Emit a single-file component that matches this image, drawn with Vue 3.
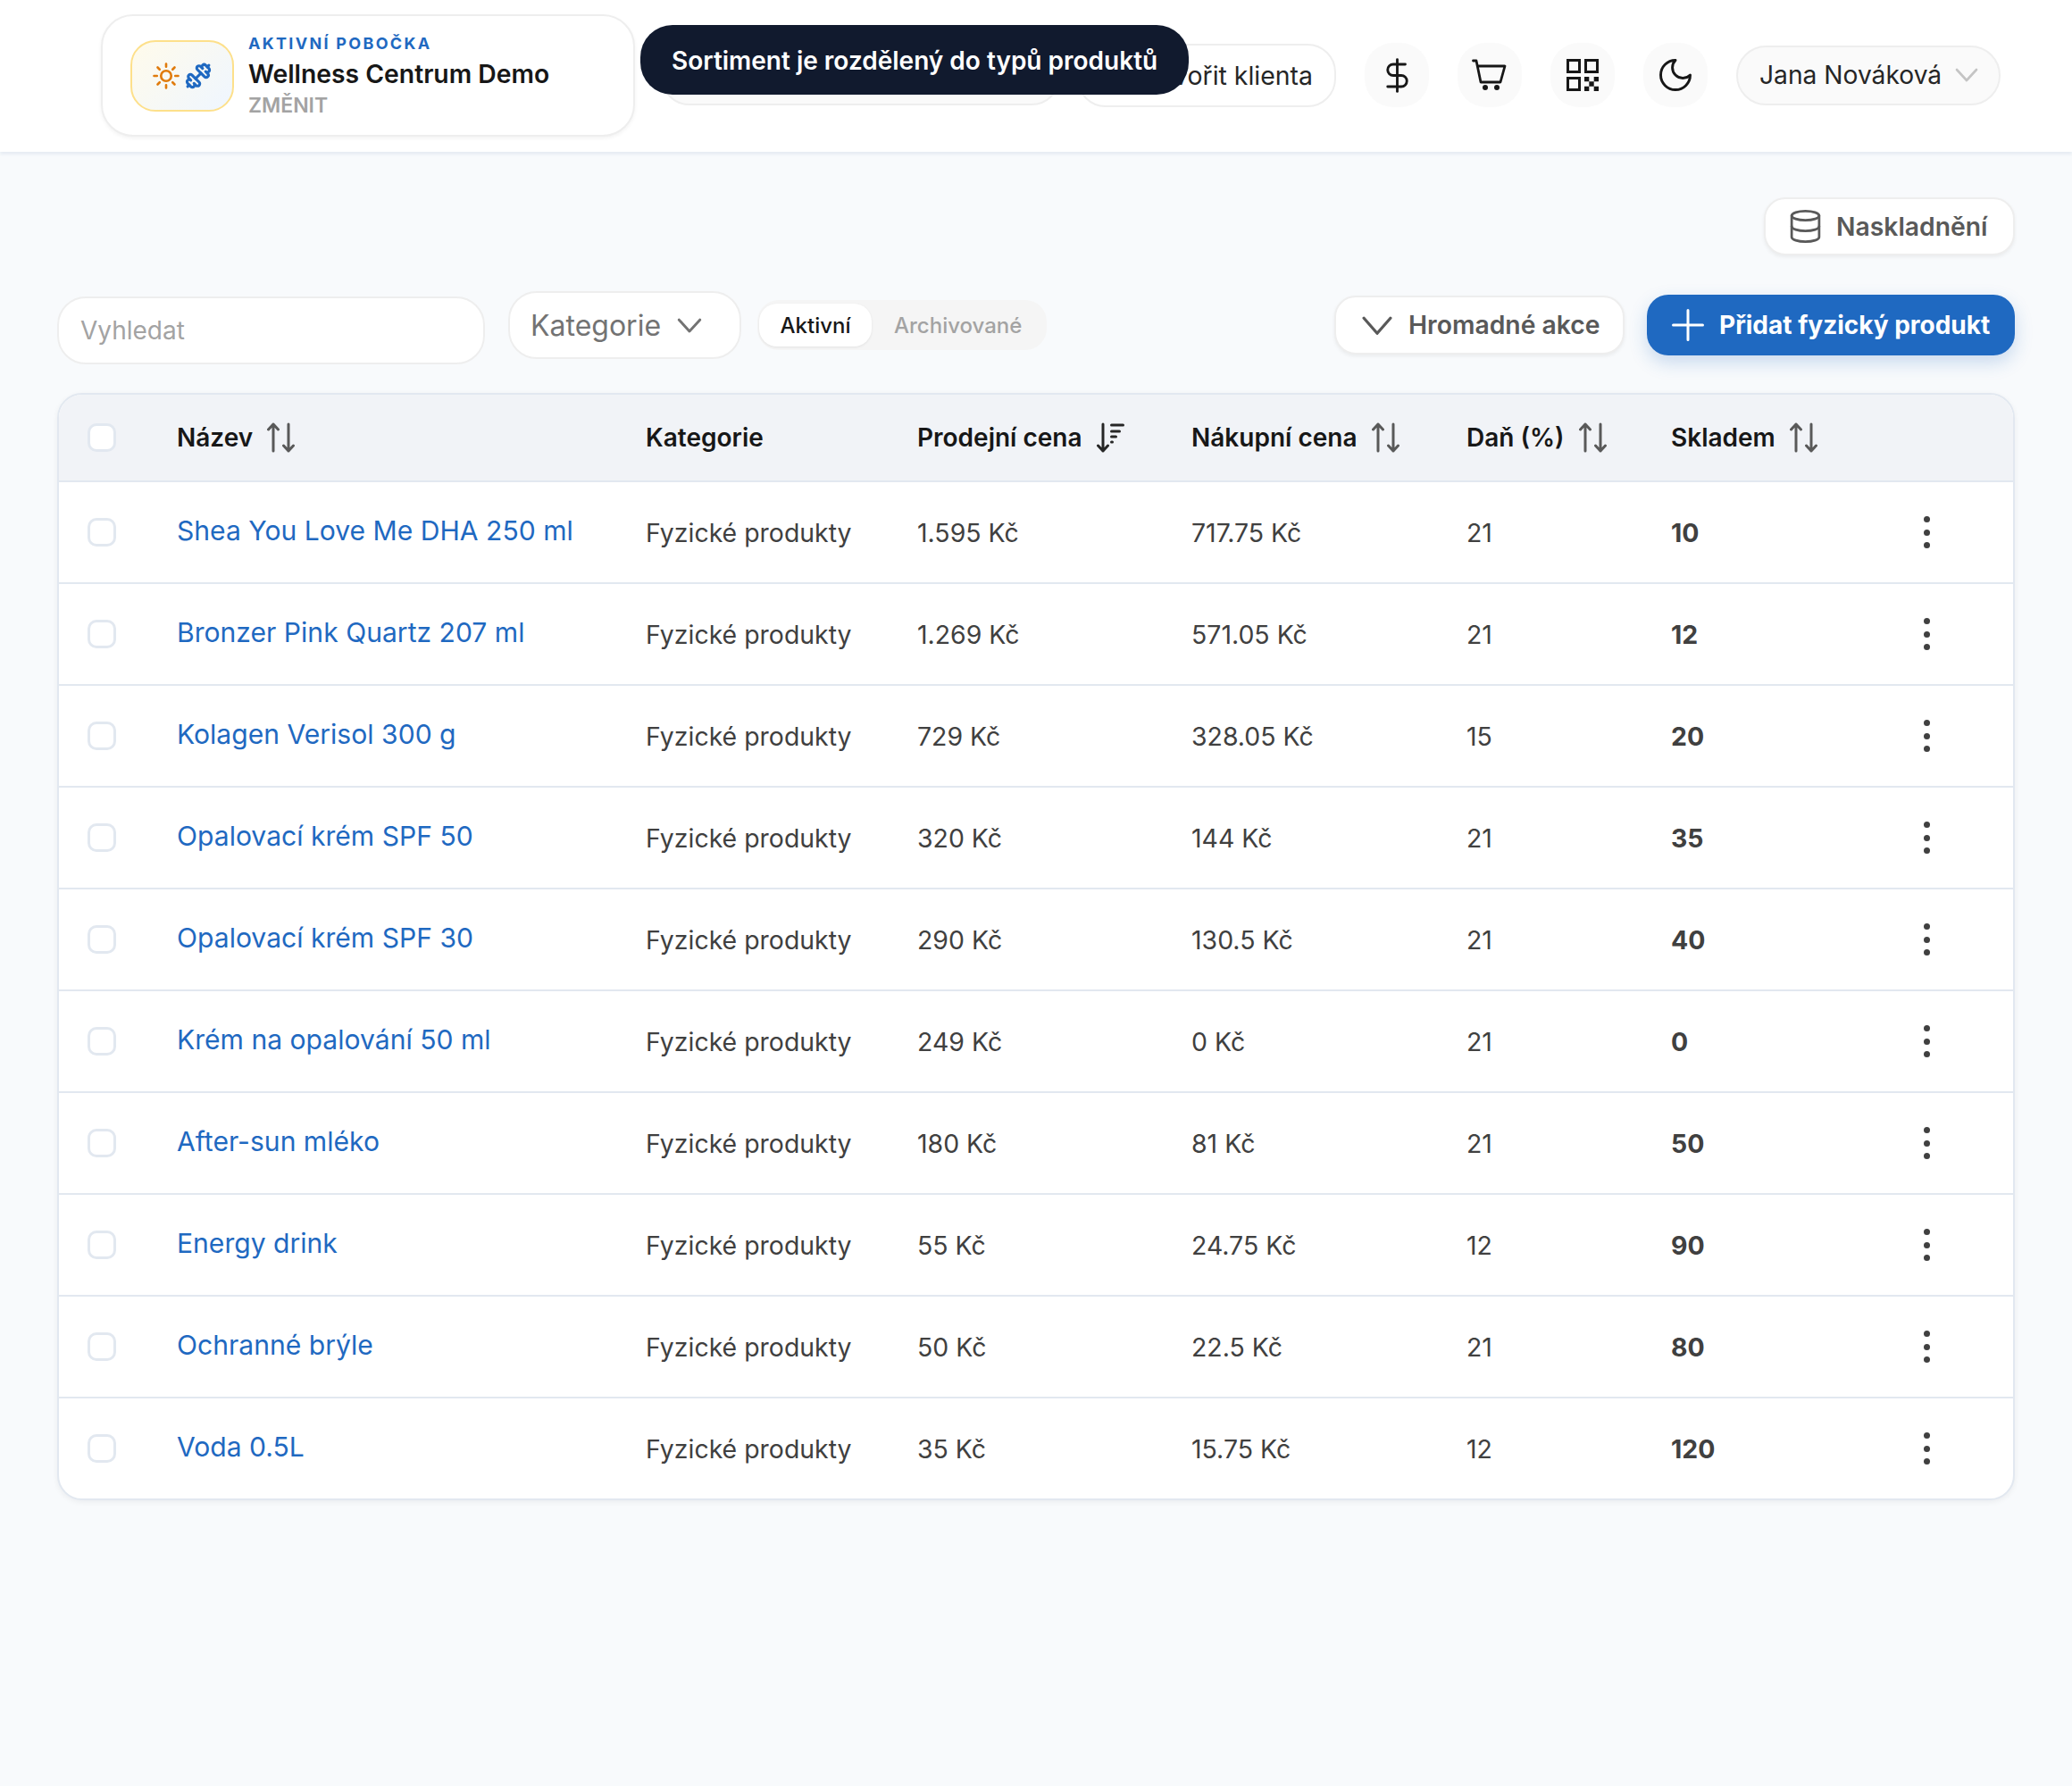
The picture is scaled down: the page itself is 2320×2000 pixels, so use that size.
<template>
  <div class="page">
    <header class="topbar">
      <div class="branch">
        <div class="branch-logo">
          <svg width="30" height="30" viewBox="0 0 24 24" fill="none" stroke="#e07b0c" stroke-width="2.1" stroke-linecap="round">
            <circle cx="12" cy="12" r="4.6" />
            <path d="M12 1.2v2.6M12 20.2v2.6M1.2 12h2.6M20.2 12h2.6M4.4 4.4l1.8 1.8M17.8 17.8l1.8 1.8M4.4 19.6l1.8-1.8M17.8 6.2l1.8-1.8" />
          </svg>
          <svg width="30" height="30" viewBox="0 0 24 24" fill="none" stroke="#1f69c1" stroke-width="2.5" stroke-linecap="round" stroke-linejoin="round">
            <g transform="matrix(-1 0 0 1 24 0)">
              <path d="M14.4 14.4 9.6 9.6" />
              <path d="M18.657 21.485a2 2 0 1 1-2.829-2.828l-1.767 1.768a2 2 0 1 1-2.829-2.829l6.364-6.364a2 2 0 1 1 2.829 2.829l-1.768 1.767a2 2 0 1 1 2.828 2.829z" />
              <path d="m21.5 21.5-1.4-1.4" />
              <path d="M3.9 3.9 2.5 2.5" />
              <path d="M6.404 12.768a2 2 0 1 1-2.829-2.829l1.768-1.767a2 2 0 1 1-2.828-2.829l2.828-2.828a2 2 0 1 1 2.829 2.828l1.767-1.768a2 2 0 1 1 2.829 2.829z" />
            </g>
          </svg>
        </div>
        <div class="branch-text">
          <div class="branch-label">AKTIVNÍ POBOČKA</div>
          <div class="branch-name">Wellness Centrum Demo</div>
          <div class="branch-change">ZMĚNIT</div>
        </div>
      </div>

      <div class="top-actions">
        <div class="top-pill top-pill-grey"></div>
        <button class="top-pill top-pill-white">Vytvořit klienta</button>
        <button class="icon-btn">
          <svg width="43" height="43" viewBox="0 0 24 24" fill="none" stroke="#171717" stroke-width="1.6" stroke-linecap="round" stroke-linejoin="round">
            <path d="M12 2v20" />
            <path d="M17 5H9.5a3.5 3.5 0 0 0 0 7h5a3.5 3.5 0 0 1 0 7H6" />
          </svg>
        </button>
        <button class="icon-btn">
          <svg width="40" height="40" viewBox="0 0 40 40" fill="none" stroke="#171717" stroke-width="2.8" stroke-linecap="round" stroke-linejoin="round">
            <path d="M1.5 4H5l5 24h22l5-18H7" />
            <circle cx="15" cy="34" r="3" fill="#171717" stroke="none" />
            <circle cx="28" cy="34" r="3" fill="#171717" stroke="none" />
          </svg>
        </button>
        <button class="icon-btn">
          <svg width="36" height="36" viewBox="0 0 36 36" fill="none" stroke="#171717" stroke-width="3">
            <rect x="1.5" y="1.5" width="13" height="13" />
            <rect x="21.5" y="1.5" width="13" height="13" />
            <rect x="1.5" y="21.5" width="13" height="13" />
            <path fill="#171717" stroke="none" d="M20 20h5.3v5.3H20zM30.7 20H36v5.3h-5.3zM25.3 25.3h5.4v5.4h-5.4zM20 30.7h5.3V36H20zM30.7 30.7H36V36h-5.3z" />
          </svg>
        </button>
        <button class="icon-btn">
          <svg width="44" height="44" viewBox="0 0 24 24" fill="none" stroke="#171717" stroke-width="1.6" stroke-linecap="round" stroke-linejoin="round">
            <path d="M12 3a6 6 0 0 0 9 9 9 9 0 1 1-9-9z" />
          </svg>
        </button>
        <button class="user-pill">
          <span>Jana Nováková</span>
          <svg width="26" height="24" viewBox="0 0 26 24" fill="none" stroke="#c4c4c4" stroke-width="2.6" stroke-linecap="round" stroke-linejoin="round">
            <path d="m2 6 11 12L24 6" />
          </svg>
        </button>
      </div>

      <div class="tooltip">Sortiment je rozdělený do typů produktů</div>
    </header>

    <main class="content">
      <div class="stock-row">
        <button class="ghost-btn stock-btn">
          <svg width="41" height="41" viewBox="0 0 24 24" fill="none" stroke="#595959" stroke-width="1.6" stroke-linecap="round" stroke-linejoin="round">
            <ellipse cx="12" cy="5" rx="9" ry="3" />
            <path d="M3 5v14a9 3 0 0 0 18 0V5" />
            <path d="M3 12a9 3 0 0 0 18 0" />
          </svg>
          Naskladnění
        </button>
      </div>

      <div class="toolbar">
        <input class="search" type="text" placeholder="Vyhledat" />
        <button class="category">
          Kategorie
          <svg width="28" height="28" viewBox="0 0 24 24" fill="none" stroke="#737373" stroke-width="2.5" stroke-linecap="round" stroke-linejoin="round">
            <path d="m2 7 10 11L22 7" />
          </svg>
        </button>
        <div class="tabs">
          <span class="tab tab-active">Aktivní</span>
          <span class="tab">Archivované</span>
        </div>
        <button class="ghost-btn bulk-btn">
          <svg width="34" height="34" viewBox="0 0 24 24" fill="none" stroke="#595959" stroke-width="2.3" stroke-linecap="round" stroke-linejoin="round">
            <path d="m1.5 6.5 10.5 12 10.5-12" />
          </svg>
          Hromadné akce
        </button>
        <button class="primary-btn">
          <svg width="36" height="36" viewBox="0 0 24 24" fill="none" stroke="#fff" stroke-width="2" stroke-linecap="round">
            <path d="M12 1v22M1 12h22" />
          </svg>
          Přidat fyzický produkt
        </button>
      </div>

      <div class="table-wrap">
        <table class="products">
          <colgroup>
            <col class="col-check" />
            <col class="col-name" />
            <col class="col-cat" />
            <col class="col-price" />
            <col class="col-buy" />
            <col class="col-tax" />
            <col class="col-stock" />
            <col />
          </colgroup>
          <thead>
            <tr>
              <th><span class="check"></span></th>
              <th v-for="col in columns" :key="col.label">
                <span class="th-inner">
                  {{ col.label }}
                  <svg v-if="col.sort === 'both'" class="sort" width="32" height="34" viewBox="0 0 32 34" fill="none" stroke="#595959" stroke-width="3" stroke-linecap="round" stroke-linejoin="round">
                    <path d="M7 32V2M1.5 8 7 2l5.500 6" />
                    <path d="M24 2v30M18.500 26l5.500 6 5.500-6" />
                  </svg>
                  <svg v-else-if="col.sort === 'desc'" class="sort" width="32" height="34" viewBox="0 0 32 34" fill="none" stroke="#262626" stroke-width="3" stroke-linecap="round" stroke-linejoin="round">
                    <path d="M7 2v30M1.500 26 7 32l5.500-6" />
                    <path d="M16.500 3h13M16.500 10h9M16.500 16h5M16.500 22h1" />
                  </svg>
                </span>
              </th>
              <th></th>
            </tr>
          </thead>
          <tbody>
            <tr v-for="item in products" :key="item.name">
              <td><span class="check"></span></td>
              <td><a class="name">{{ item.name }}</a></td>
              <td>Fyzické produkty</td>
              <td>{{ item.price }}</td>
              <td>{{ item.buy }}</td>
              <td>{{ item.tax }}</td>
              <td class="stock">{{ item.stock }}</td>
              <td>
                <span class="dots"><i></i><i></i><i></i></span>
              </td>
            </tr>
          </tbody>
        </table>
      </div>
    </main>
  </div>
</template>

<script setup>
const columns = [
  { label: 'Název', sort: 'both' },
  { label: 'Kategorie', sort: null },
  { label: 'Prodejní cena', sort: 'desc' },
  { label: 'Nákupní cena', sort: 'both' },
  { label: 'Daň (%)', sort: 'both' },
  { label: 'Skladem', sort: 'both' }
]

const products = [
  { name: 'Shea You Love Me DHA 250 ml', price: '1.595 Kč', buy: '717.75 Kč', tax: 21, stock: 10 },
  { name: 'Bronzer Pink Quartz 207 ml', price: '1.269 Kč', buy: '571.05 Kč', tax: 21, stock: 12 },
  { name: 'Kolagen Verisol 300 g', price: '729 Kč', buy: '328.05 Kč', tax: 15, stock: 20 },
  { name: 'Opalovací krém SPF 50', price: '320 Kč', buy: '144 Kč', tax: 21, stock: 35 },
  { name: 'Opalovací krém SPF 30', price: '290 Kč', buy: '130.5 Kč', tax: 21, stock: 40 },
  { name: 'Krém na opalování 50 ml', price: '249 Kč', buy: '0 Kč', tax: 21, stock: 0 },
  { name: 'After-sun mléko', price: '180 Kč', buy: '81 Kč', tax: 21, stock: 50 },
  { name: 'Energy drink', price: '55 Kč', buy: '24.75 Kč', tax: 12, stock: 90 },
  { name: 'Ochranné brýle', price: '50 Kč', buy: '22.5 Kč', tax: 21, stock: 80 },
  { name: 'Voda 0.5L', price: '35 Kč', buy: '15.75 Kč', tax: 12, stock: 120 }
]
</script>

<style>
body {
  background: #f8fafc;
}
</style>

<style scoped>
.page {
  min-height: 2000px;
  background: #f8fafc;
  font-family: Inter, "Liberation Sans", sans-serif;
  color: #171717;
}

button {
  font-family: inherit;
  cursor: pointer;
}

.topbar {
  position: relative;
  height: 170px;
  box-sizing: border-box;
  padding: 16px 80px 0 113px;
  background: #fff;
  box-shadow: 0 3px 3px #e7ecf3;
  display: flex;
  justify-content: space-between;
  align-items: flex-start;
}

.branch {
  width: 598px;
  height: 137px;
  box-sizing: border-box;
  padding-left: 31px;
  display: flex;
  align-items: center;
  gap: 16px;
  background: #fff;
  border: 2px solid #eeeeee;
  border-radius: 36px;
  box-shadow: 0 2px 4px rgba(0, 0, 0, 0.05);
}

.branch-logo {
  width: 116px;
  height: 80px;
  box-sizing: border-box;
  display: flex;
  align-items: center;
  justify-content: center;
  gap: 6px;
  border: 2px solid #fde08b;
  border-radius: 28px;
  background: linear-gradient(135deg, #fffbeb, #eff6ff);
}

.branch-label {
  font-size: 18px;
  line-height: 24px;
  font-weight: 700;
  letter-spacing: 2.3px;
  color: #1f69c1;
}

.branch-name {
  margin-top: 3px;
  font-size: 28.3px;
  line-height: 38px;
  font-weight: 600;
  color: #171717;
}

.branch-change {
  margin-top: 2px;
  font-size: 23px;
  line-height: 28px;
  font-weight: 600;
  color: #a3a3a3;
}

.top-actions {
  display: flex;
  align-items: center;
  height: 72px;
  margin-top: 32px;
  gap: 32px;
}

.top-pill {
  box-sizing: border-box;
  border: 2px solid #eeeeee;
  border-radius: 32px;
  font-size: 28.44px;
  color: #262626;
}

.top-pill-grey {
  width: 447px;
  height: 67px;
  margin-right: -13px;
  background: #fafafa;
}

.top-pill-white {
  width: 290px;
  height: 71px;
  padding: 0 24px 0 0;
  text-align: right;
  background: #fff;
}

.icon-btn {
  width: 72px;
  height: 72px;
  padding: 0;
  border: none;
  border-radius: 32px;
  background: #fafafa;
  display: flex;
  align-items: center;
  justify-content: center;
}

.user-pill {
  width: 296px;
  height: 67px;
  box-sizing: border-box;
  padding: 0 23px 0 24px;
  display: flex;
  align-items: center;
  justify-content: space-between;
  background: #fafafa;
  border: 2px solid #eeeeee;
  border-radius: 34px;
  font-size: 28.2px;
  color: #262626;
}

.tooltip {
  position: absolute;
  left: 717px;
  top: 28px;
  height: 78px;
  box-sizing: border-box;
  padding: 2px 35px 0;
  display: flex;
  align-items: center;
  background: #111a2e;
  border-radius: 36px;
  color: #fff;
  font-size: 28px;
  font-weight: 600;
  white-space: nowrap;
}

.content {
  padding: 51px 64px 0;
}

.stock-row {
  display: flex;
  justify-content: flex-end;
}

.ghost-btn {
  display: flex;
  align-items: center;
  box-sizing: border-box;
  background: #fff;
  border: 2px solid #eeeeee;
  border-radius: 24px;
  box-shadow: 0 2px 4px rgba(0, 0, 0, 0.06);
  font-size: 28.3px;
  font-weight: 600;
  color: #595959;
}

.stock-btn {
  width: 281px;
  height: 65px;
  padding: 0 0 0 24px;
  gap: 14px;
}

.toolbar {
  height: 76px;
  margin-top: 40px;
  display: flex;
  align-items: center;
}

.search {
  width: 479px;
  height: 76px;
  box-sizing: border-box;
  margin-top: 11px;
  padding: 0 24px;
  background: #fff;
  border: 2px solid #eeeeee;
  border-radius: 32px;
  font-family: inherit;
  font-size: 28px;
  color: #171717;
  outline: none;
}

.search::placeholder {
  color: #a3a3a3;
}

.category {
  width: 261px;
  height: 76px;
  box-sizing: border-box;
  margin-left: 26px;
  padding: 0 0 0 23px;
  display: flex;
  align-items: center;
  gap: 18px;
  background: #fff;
  border: 2px solid #eeeeee;
  border-radius: 32px;
  font-size: 32px;
  color: #737373;
}

.tabs {
  margin-left: 18px;
  height: 56px;
  box-sizing: border-box;
  padding: 4px 28px 4px 2px;
  display: flex;
  align-items: center;
  gap: 25px;
  background: #f5f5f5;
  border-radius: 24px;
}

.tab {
  font-size: 24px;
  font-weight: 500;
  color: #a3a3a3;
}

.tab-active {
  width: 126px;
  height: 48px;
  display: flex;
  align-items: center;
  justify-content: center;
  background: #fff;
  border-radius: 20px;
  color: #171717;
  box-shadow: 0 1px 3px rgba(0, 0, 0, 0.08);
}

.bulk-btn {
  width: 325px;
  height: 66px;
  margin-left: auto;
  padding: 0 0 0 29px;
  gap: 18px;
}

.primary-btn {
  width: 412px;
  height: 68px;
  margin-left: 25px;
  padding: 0 0 0 28px;
  display: flex;
  align-items: center;
  gap: 17px;
  background: #1f69c1;
  border: none;
  border-radius: 24px;
  box-shadow: 0 8px 20px rgba(31, 105, 193, 0.22);
  font-size: 28px;
  font-weight: 700;
  color: #fff;
}

.table-wrap {
  margin-top: 38px;
  background: #fff;
  border: 2px solid #e2e8f0;
  border-radius: 28px;
  overflow: hidden;
  box-shadow: 0 2px 6px rgba(15, 23, 42, 0.06);
}

.products {
  width: 100%;
  table-layout: fixed;
  border-collapse: separate;
  border-spacing: 0;
  font-size: 28.44px;
  color: #404040;
}

.col-check {
  width: 132px;
}

.col-name {
  width: 525px;
}

.col-cat {
  width: 304px;
}

.col-price {
  width: 307px;
}

.col-buy {
  width: 308px;
}

.col-tax {
  width: 229px;
}

.col-stock {
  width: 250px;
}

thead th {
  height: 96px;
  padding: 0;
  background: #f1f3f7;
  border-bottom: 2px solid #e2e8f0;
  text-align: left;
  font-size: 28px;
  font-weight: 600;
  color: #171717;
}

.th-inner {
  display: inline-flex;
  align-items: center;
  gap: 16px;
}

.sort {
  flex: none;
}

tbody td {
  height: 112px;
  padding: 0;
  border-bottom: 2px solid #e2e8f0;
}

tbody tr:last-child td {
  border-bottom: none;
}

th:first-child,
td:first-child {
  padding-left: 32px;
}

.check {
  display: block;
  width: 32px;
  height: 32px;
  box-sizing: border-box;
  background: #fff;
  border: 3px solid #e2e8f0;
  border-radius: 10px;
}

.name {
  position: relative;
  top: -2px;
  font-size: 30.1px;
  color: #1f69c1;
}

.stock {
  font-weight: 700;
}

.dots {
  display: flex;
  flex-direction: column;
  align-items: center;
  gap: 7.4px;
  width: 8px;
  margin-left: 32px;
}

.dots i {
  display: block;
  width: 7px;
  height: 7px;
  border-radius: 50%;
  background: #404040;
}
</style>
